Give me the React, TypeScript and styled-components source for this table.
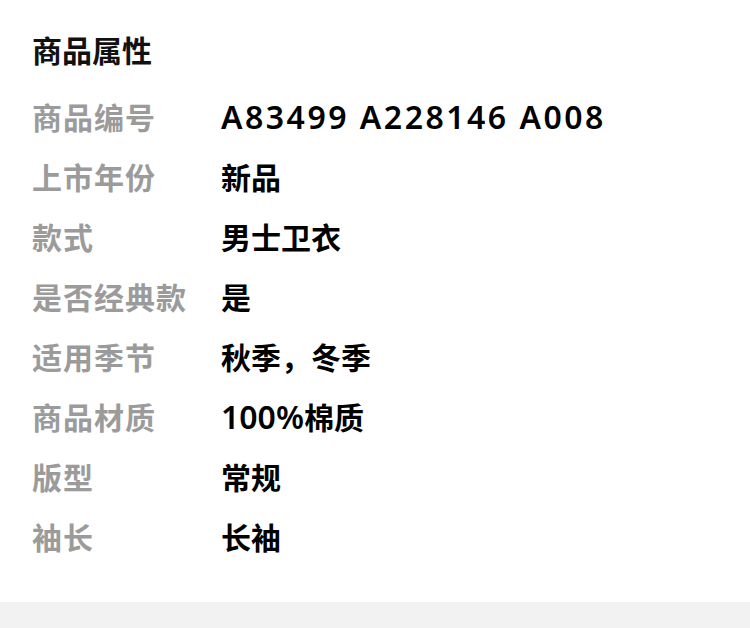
import type { ReactNode } from 'react';
import styled, { createGlobalStyle } from 'styled-components';

const GlobalStyle = createGlobalStyle`
  html, body {
    margin: 0;
    padding: 0;
    background: #f2f2f2;
    font-family: "Noto Sans CJK SC", "Noto Sans", sans-serif;
  }
`;

const Page = styled.div`
  width: 750px;
  height: 628px;
  background: #f2f2f2;
`;

const Panel = styled.section`
  background: #ffffff;
  padding: 29px 0 36px 32px;
`;

const Title = styled.h2`
  margin: 0 0 17px;
  font-size: 30px;
  line-height: 40px;
  font-weight: 700;
  color: #111111;
`;

const Row = styled.div`
  display: flex;
  align-items: center;
  height: 60px;
`;

const Label = styled.div`
  width: 189px;
  flex-shrink: 0;
  font-size: 30px;
  font-weight: 700;
  color: #9b9b9b;
  letter-spacing: 1px;
`;

const Value = styled.div`
  font-size: 30px;
  font-weight: 700;
  color: #000000;
`;

// latin digits in the reference come from a wider face than the cjk one
const Latin = styled.span<{ $spacing?: number }>`
  font-family: "Noto Sans", sans-serif;
  font-size: 32px;
  font-weight: 600;
  letter-spacing: ${(p) => p.$spacing ?? 0}px;
`;

interface Attr {
  label: string;
  value: ReactNode;
}

const attrs: Attr[] = [
  { label: '商品编号', value: <Latin $spacing={2.5}>A83499 A228146 A008</Latin> },
  { label: '上市年份', value: '新品' },
  { label: '款式', value: '男士卫衣' },
  { label: '是否经典款', value: '是' },
  { label: '适用季节', value: '秋季，冬季' },
  { label: '商品材质', value: <><Latin>100%</Latin>棉质</> },
  { label: '版型', value: '常规' },
  { label: '袖长', value: '长袖' },
];

export default function App() {
  return (
    <Page>
      <GlobalStyle />
      <Panel>
        <Title>商品属性</Title>
        {attrs.map((a) => (
          <Row key={a.label}>
            <Label>{a.label}</Label>
            <Value>{a.value}</Value>
          </Row>
        ))}
      </Panel>
    </Page>
  );
}
